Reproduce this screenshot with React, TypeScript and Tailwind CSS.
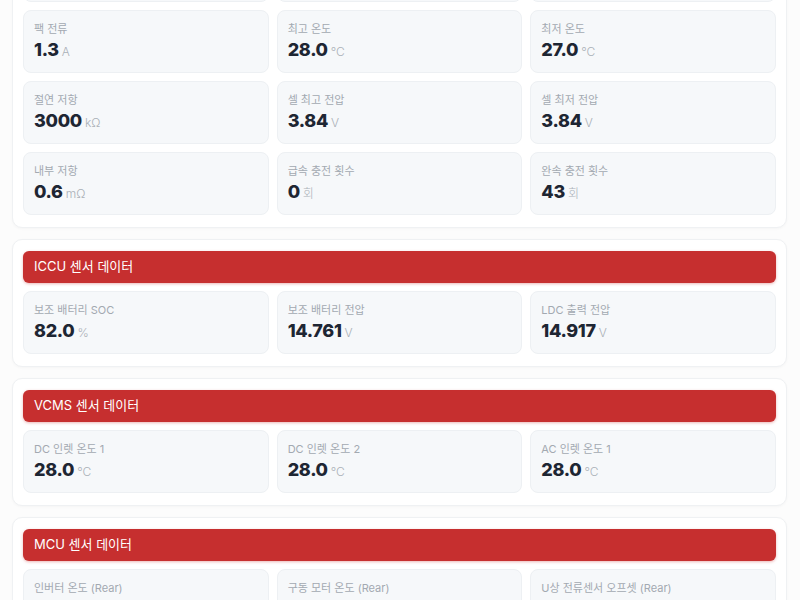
type Metric = { label: string; value: string; unit: string };
type Section = { title: string; rows: Metric[][] };

const sections: Section[] = [
  {
    title: "BMS 센서 데이터",
    rows: [
      [
        { label: "팩 전압", value: "622.1", unit: "V" },
        { label: "배터리 SOC", value: "79.5", unit: "%" },
        { label: "배터리 SOH", value: "100.0", unit: "%" },
      ],
      [
        { label: "팩 전류", value: "1.3", unit: "A" },
        { label: "최고 온도", value: "28.0", unit: "°C" },
        { label: "최저 온도", value: "27.0", unit: "°C" },
      ],
      [
        { label: "절연 저항", value: "3000", unit: "kΩ" },
        { label: "셀 최고 전압", value: "3.84", unit: "V" },
        { label: "셀 최저 전압", value: "3.84", unit: "V" },
      ],
      [
        { label: "내부 저항", value: "0.6", unit: "mΩ" },
        { label: "급속 충전 횟수", value: "0", unit: "회" },
        { label: "완속 충전 횟수", value: "43", unit: "회" },
      ],
    ],
  },
  {
    title: "ICCU 센서 데이터",
    rows: [
      [
        { label: "보조 배터리 SOC", value: "82.0", unit: "%" },
        { label: "보조 배터리 전압", value: "14.761", unit: "V" },
        { label: "LDC 출력 전압", value: "14.917", unit: "V" },
      ],
    ],
  },
  {
    title: "VCMS 센서 데이터",
    rows: [
      [
        { label: "DC 인렛 온도 1", value: "28.0", unit: "°C" },
        { label: "DC 인렛 온도 2", value: "28.0", unit: "°C" },
        { label: "AC 인렛 온도 1", value: "28.0", unit: "°C" },
      ],
    ],
  },
  {
    title: "MCU 센서 데이터",
    rows: [
      [
        { label: "인버터 온도 (Rear)", value: "41.0", unit: "°C" },
        { label: "구동 모터 온도 (Rear)", value: "30.0", unit: "°C" },
        { label: "U상 전류센서 오프셋 (Rear)", value: "0.0", unit: "A" },
      ],
    ],
  },
];

function MetricTile({ m }: { m: Metric }) {
  return (
    <div className="h-[63px] rounded-lg border border-[#edf0f3] bg-[#f6f8fa] px-[10px] pt-[11px]">
      <div className="text-[11px] leading-[15px] text-[#a3a9b1]">{m.label}</div>
      <div className="mt-[2px] flex items-baseline gap-[3px]">
        <span className="text-[18px] font-extrabold leading-[22px] tracking-[-0.3px] text-[#1e2633]">
          {m.value}
        </span>
        <span className="text-[12px] font-light text-[#aab0b7]">{m.unit}</span>
      </div>
    </div>
  );
}

function SensorCard({ s }: { s: Section }) {
  return (
    <div className="rounded-[10px] border border-[#eff1f3] bg-white px-[10px] pt-[11px] pb-[12px] shadow-[0_1px_3px_rgba(0,0,0,0.03)]">
      <div className="flex h-[32px] items-center rounded-md bg-[#c62f2f] px-[11px] text-[13px] text-white shadow-[0_1px_3px_rgba(198,47,47,0.35)]">
        {s.title}
      </div>
      <div className="mt-[8px] flex flex-col gap-[8px]">
        {s.rows.map((row, i) => (
          <div key={i} className="grid grid-cols-3 gap-[8px]">
            {row.map((m) => (
              <MetricTile key={m.label} m={m} />
            ))}
          </div>
        ))}
      </div>
    </div>
  );
}

export default function App() {
  return (
    <div
      className="h-[600px] overflow-hidden bg-[#fcfcfc]"
      style={{ fontFamily: '"Inter", "Noto Sans CJK KR", sans-serif' }}
    >
      <div className="-mt-[113px] flex flex-col gap-[11px] pl-[12px] pr-[13px]">
        {sections.map((s) => (
          <SensorCard key={s.title} s={s} />
        ))}
      </div>
    </div>
  );
}
